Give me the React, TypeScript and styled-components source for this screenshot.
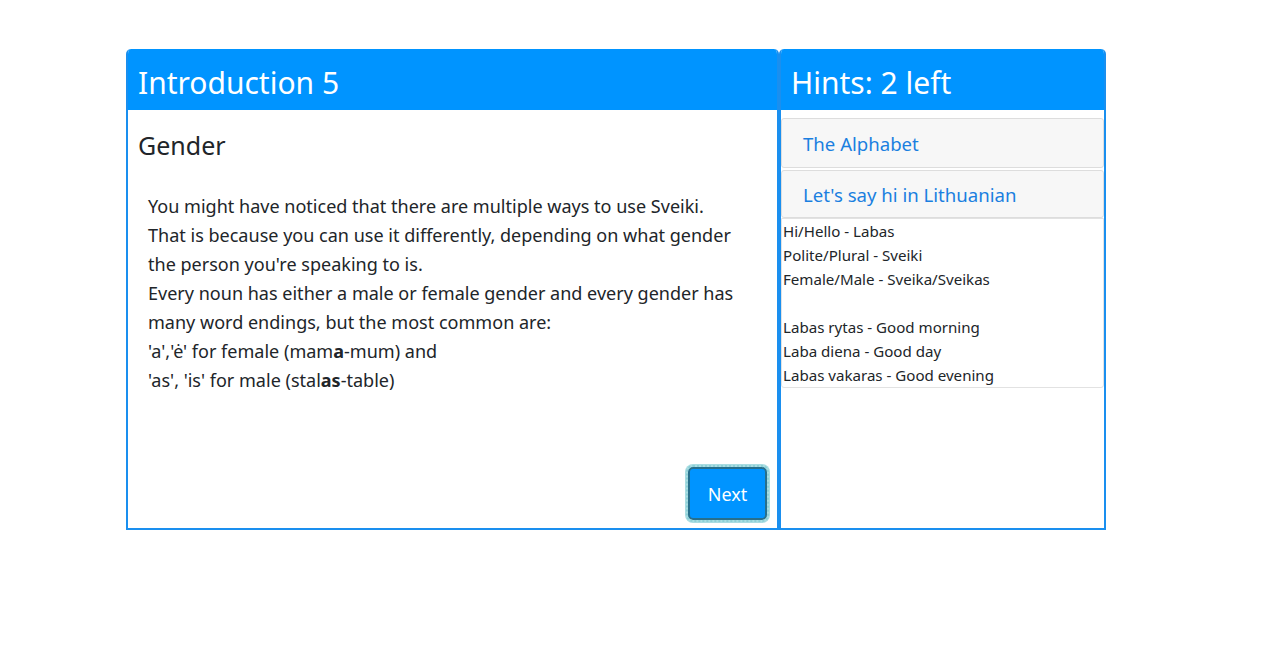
import React from "react";
import styled, { createGlobalStyle } from "styled-components";

const Global = createGlobalStyle`
  html, body { margin: 0; padding: 0; background: #fff; }
  body { font-family: "Noto Sans", "Open Sans", sans-serif; color: #212529; }
`;

const Page = styled.div`
  padding: 49px 0 0 126px;
  display: flex;
`;

const Card = styled.section<{ $w: number }>`
  width: ${(p) => p.$w}px;
  height: 481px;
  box-sizing: border-box;
  border: 2px solid #1a8fef;
  border-top: none;
  border-radius: 5px 5px 0 0;
  display: flex;
  flex-direction: column;
  overflow: hidden;
`;

const Header = styled.header`
  background: #0094ff;
  color: #fff;
  height: 61px;
  box-sizing: border-box;
  margin: 0 -2px;
  padding: 5px 12px 0;
  display: flex;
  align-items: center;
  font-size: 30px;
  font-weight: 400;
  border-radius: 5px 5px 0 0;
`;

const Body = styled.div`
  flex: 1;
  display: flex;
  flex-direction: column;
  padding: 15px 10px 8px 10px;
`;

const Title = styled.h2`
  margin: 0;
  font-size: 25px;
  font-weight: 400;
  line-height: 40px;
`;

const Text = styled.p`
  margin: 27px 0 0 10px;
  font-size: 18.05px;
  line-height: 29px;
  flex: 1;
`;

const Footer = styled.div`
  display: flex;
  justify-content: flex-end;
`;

const NextButton = styled.button`
  width: 79px;
  height: 53px;
  box-sizing: border-box;
  background: #0094ff;
  color: #fff;
  font-family: inherit;
  font-size: 18px;
  border: 2px solid #276f8c;
  border-radius: 5px;
  outline: 2px dotted #8ccfd6;
  outline-offset: 0;
  box-shadow: 0 0 0 3px #a9dde2;
  cursor: pointer;
`;

const HintBody = styled.div`
  padding: 8px 0 0 0;
  display: flex;
  flex-direction: column;
`;

const HintItem = styled.div<{ $h: number }>`
  height: ${(p) => p.$h}px;
  box-sizing: border-box;
  background: #f7f7f7;
  border: 1px solid #dddddd;
  border-radius: 3px;
  margin-bottom: 2px;
  display: flex;
  align-items: center;
  padding-left: 21px;
  color: #1a7fe0;
  font-size: 18.6px;
`;

const HintPanel = styled.div`
  margin-top: -2px;
  border: 1px solid #e2e2e2;
  border-radius: 0 0 3px 3px;
  padding: 0 0 0 1px;
  font-size: 15.1px;
  line-height: 24px;
  white-space: pre-line;
`;

export default function App() {
  return (
    <>
      <Global />
      <Page>
        <Card $w={653}>
          <Header>Introduction 5</Header>
          <Body>
            <Title>Gender</Title>
            <Text>
              You might have noticed that there are multiple ways to use Sveiki.
              <br />
              That is because you can use it differently, depending on what gender
              <br />
              the person you're speaking to is.
              <br />
              Every noun has either a male or female gender and every gender has
              <br />
              many word endings, but the most common are:
              <br />
              'a','ė' for female (mam<b>a</b>-mum) and
              <br />
              'as', 'is' for male (stal<b>as</b>-table)
            </Text>
            <Footer>
              <NextButton>Next</NextButton>
            </Footer>
          </Body>
        </Card>
        <Card $w={327}>
          <Header>Hints: 2 left</Header>
          <HintBody>
            <HintItem $h={50}>The Alphabet</HintItem>
            <HintItem $h={48}>Let's say hi in Lithuanian</HintItem>
            <HintPanel>
              {"Hi/Hello - Labas\nPolite/Plural - Sveiki\nFemale/Male - Sveika/Sveikas\n\nLabas rytas - Good morning\nLaba diena - Good day\nLabas vakaras - Good evening"}
            </HintPanel>
          </HintBody>
        </Card>
      </Page>
    </>
  );
}
